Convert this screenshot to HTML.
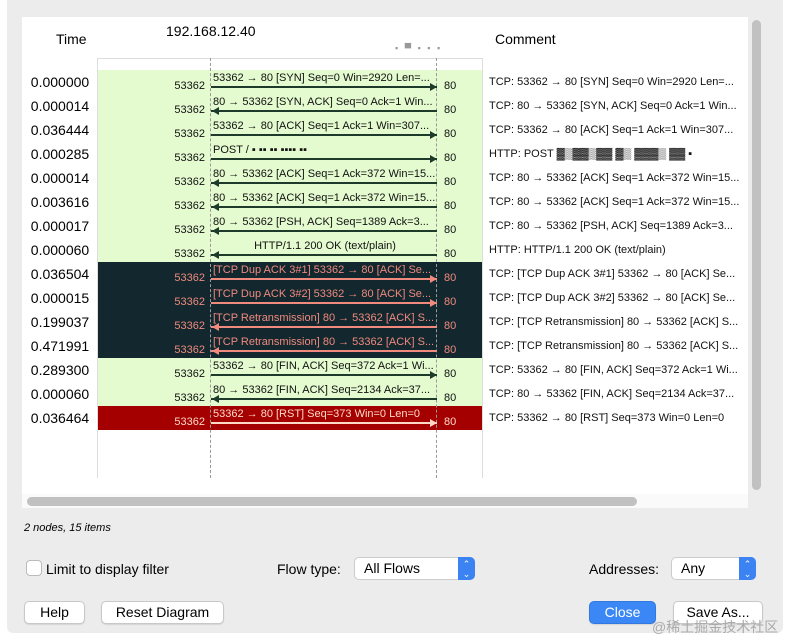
<!DOCTYPE html>
<html><head><meta charset="utf-8"><style>
*{margin:0;padding:0;box-sizing:border-box}
body{width:809px;height:642px;background:#fff;font-family:"Liberation Sans","Noto Sans CJK SC",sans-serif;position:relative;overflow:hidden}
.win{position:absolute;left:7px;top:0;width:776px;height:633px;background:#ececec;border-radius:0 0 6px 6px}
.panel{position:absolute;left:22px;top:17px;width:726px;height:477px;background:#fff}
.a{position:absolute;white-space:nowrap}
.t{font-size:14px;color:#000;width:80px;text-align:center;left:20px}
.p{font-size:11px;right:604px;}
.q{font-size:11px;left:444px}
.l{font-size:11px;left:213px;width:224px;overflow:hidden}
.c{font-size:11px;left:489px;color:#111}
.ar{position:absolute;left:211px;width:226px;height:2px}
.btn{position:absolute;height:23px;background:#fff;border:1px solid #c8c8c8;border-radius:5px;font-size:14px;text-align:center;line-height:21px;box-shadow:0 1px 1px rgba(0,0,0,.1)}
.sel{position:absolute;height:23px;background:#fff;border:1px solid #ccc;border-radius:5px;font-size:14px;line-height:21px;padding-left:9px}
.sel i{position:absolute;right:-1px;top:-1px;width:17px;height:23px;background:#3b82f2;border-radius:0 5px 5px 0;color:#fff;font-style:normal;font-size:9px;text-align:center;line-height:10px;padding-top:2px}
</style></head><body>
<div class="win"></div>
<div class="panel"></div>
<div class="a" style="left:56px;top:31px;font-size:14px">Time</div>
<div class="a" style="left:166px;top:23px;font-size:14px">192.168.12.40</div>
<div class="a" style="left:395px;top:43px;font-size:9px;color:#999;letter-spacing:2px">▪ ▀ ▪ ▪ ▪</div>
<div class="a" style="left:495px;top:31px;font-size:14px">Comment</div>
<div class="a" style="left:97px;top:58px;width:386px;height:420px;border:1px solid #ddd;border-bottom:none"></div>
<div class="a" style="left:98px;top:70px;width:384px;height:192px;background:#e4fbd0"></div>
<div class="a" style="left:98px;top:262px;width:384px;height:96px;background:#12272e"></div>
<div class="a" style="left:98px;top:358px;width:384px;height:48px;background:#e4fbd0"></div>
<div class="a" style="left:98px;top:406px;width:384px;height:24px;background:#a40000"></div>
<div class="a" style="left:210px;top:58px;height:420px;border-left:1px dashed #999"></div>
<div class="a" style="left:436px;top:58px;height:420px;border-left:1px dashed #999"></div>
<div id="rows"></div>
<script>
var R=[
["0.000000","53362 → 80 [SYN] Seq=0 Win=2920 Len=...",1,"TCP: 53362 → 80 [SYN] Seq=0 Win=2920 Len=...",0],
["0.000014","80 → 53362 [SYN, ACK] Seq=0 Ack=1 Win...",0,"TCP: 80 → 53362 [SYN, ACK] Seq=0 Ack=1 Win...",0],
["0.036444","53362 → 80 [ACK] Seq=1 Ack=1 Win=307...",1,"TCP: 53362 → 80 [ACK] Seq=1 Ack=1 Win=307...",0],
["0.000285","POST / ▪ ▪▪ ▪▪ ▪▪▪▪ ▪▪",1,"HTTP: POST ▓▒▓▓▒▓▓ ▓▒ ▓▓▓▒ ▓▓ ▪",0],
["0.000014","80 → 53362 [ACK] Seq=1 Ack=372 Win=15...",0,"TCP: 80 → 53362 [ACK] Seq=1 Ack=372 Win=15...",0],
["0.003616","80 → 53362 [ACK] Seq=1 Ack=372 Win=15...",0,"TCP: 80 → 53362 [ACK] Seq=1 Ack=372 Win=15...",0],
["0.000017","80 → 53362 [PSH, ACK] Seq=1389 Ack=3...",0,"TCP: 80 → 53362 [PSH, ACK] Seq=1389 Ack=3...",0],
["0.000060","HTTP/1.1 200 OK  (text/plain)",0,"HTTP: HTTP/1.1 200 OK  (text/plain)",0],
["0.036504","[TCP Dup ACK 3#1] 53362 → 80 [ACK] Se...",1,"TCP: [TCP Dup ACK 3#1] 53362 → 80 [ACK] Se...",1],
["0.000015","[TCP Dup ACK 3#2] 53362 → 80 [ACK] Se...",1,"TCP: [TCP Dup ACK 3#2] 53362 → 80 [ACK] Se...",1],
["0.199037","[TCP Retransmission] 80 → 53362 [ACK] S...",0,"TCP: [TCP Retransmission] 80 → 53362 [ACK] S...",1],
["0.471991","[TCP Retransmission] 80 → 53362 [ACK] S...",0,"TCP: [TCP Retransmission] 80 → 53362 [ACK] S...",1],
["0.289300","53362 → 80 [FIN, ACK] Seq=372 Ack=1 Wi...",1,"TCP: 53362 → 80 [FIN, ACK] Seq=372 Ack=1 Wi...",0],
["0.000060","80 → 53362 [FIN, ACK] Seq=2134 Ack=37...",0,"TCP: 80 → 53362 [FIN, ACK] Seq=2134 Ack=37...",0],
["0.036464","53362 → 80 [RST] Seq=373 Win=0 Len=0",1,"TCP: 53362 → 80 [RST] Seq=373 Win=0 Len=0",2]];
var h="";
R.forEach(function(r,i){var y=70+i*24;var col=r[4]==1?"#f08a7e":r[4]==2?"#ffd9c8":"#111";var lc=r[4]==1?"#f08a7e":r[4]==2?"#ffd9c8":"#1d3a2a";
h+='<div class="a t" style="top:'+(y+4)+'px">'+r[0]+'</div>';
h+='<div class="a p" style="top:'+(y+10)+'px;color:'+col+'">53362</div>';
h+='<div class="a q" style="top:'+(y+10)+'px;color:'+col+'">80</div>';
h+='<div class="a l" style="top:'+(y+2)+'px;color:'+col+';'+(i==7?'text-align:center':'')+'">'+r[1]+'</div>';
h+='<div class="ar" style="top:'+(y+16)+'px;background:'+lc+'"></div>';
h+='<div class="a" style="top:'+(y+13)+'px;left:'+(r[2]?430:212)+'px;width:0;height:0;border-top:4px solid transparent;border-bottom:4px solid transparent;'+(r[2]?'border-left:7px solid ':'border-right:7px solid ')+lc+'"></div>';
h+='<div class="a c" style="top:'+(y+6)+'px">'+r[3]+'</div>';});
document.getElementById("rows").innerHTML=h;
</script>
<div class="a" style="left:22px;top:494px;width:726px;height:14px;background:#fafafa"></div>
<div class="a" style="left:27px;top:497px;width:610px;height:9px;background:#c1c1c1;border-radius:5px"></div>
<div class="a" style="left:752px;top:20px;width:9px;height:470px;background:#c1c1c1;border-radius:5px"></div>
<div class="a" style="left:24px;top:522px;font-size:11px;font-style:italic">2 nodes, 15 items</div>
<div class="a" style="left:26px;top:560px;width:16px;height:16px;background:#fff;border:1px solid #bbb;border-radius:4px"></div>
<div class="a" style="left:46px;top:561px;font-size:14px">Limit to display filter</div>
<div class="a" style="left:277px;top:561px;font-size:14px">Flow type:</div>
<div class="sel" style="left:354px;top:557px;width:121px">All Flows<i>⌃<br>⌄</i></div>
<div class="a" style="left:589px;top:561px;font-size:14px">Addresses:</div>
<div class="sel" style="left:671px;top:557px;width:85px">Any<i>⌃<br>⌄</i></div>
<div class="btn" style="left:24px;top:601px;width:61px">Help</div>
<div class="btn" style="left:101px;top:601px;width:123px">Reset Diagram</div>
<div class="btn" style="left:589px;top:601px;width:67px;background:#3b87f5;color:#fff;border-color:#3179e0">Close</div>
<div class="btn" style="left:673px;top:601px;width:90px">Save As...</div>
<div class="a" style="left:652px;top:617px;font-size:14px;color:#aaa">@稀土掘金技术社区</div>
</body></html>
